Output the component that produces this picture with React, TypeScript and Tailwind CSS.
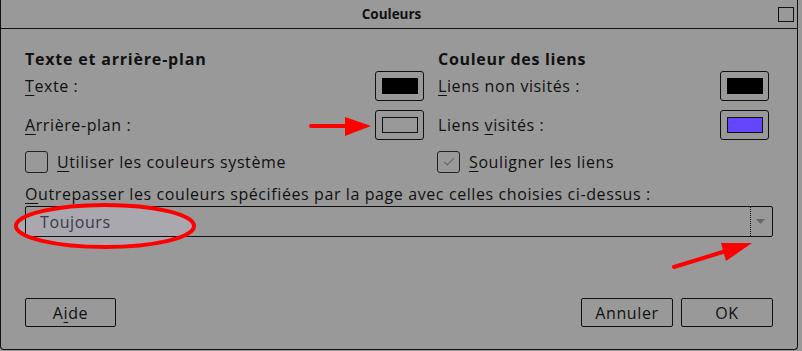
import { Check } from 'lucide-react';

const Mn = ({ children }: { children: string }) => (
  <span className="underline decoration-1 underline-offset-[3px]">{children}</span>
);

const Swatch = ({ inner }: { inner: string }) => (
  <div className="flex h-[30px] w-[49px] items-center justify-center rounded-[3px] border border-[#111]">
    <div className={`h-[16px] w-[36px] ${inner}`} />
  </div>
);

const Row = ({ children, swatch }: { children: React.ReactNode; swatch: string }) => (
  <div className="flex h-[30px] items-center justify-between">
    <span>{children}</span>
    <Swatch inner={swatch} />
  </div>
);

const CheckRow = ({ checked, children }: { checked?: boolean; children: React.ReactNode }) => (
  <div className="flex h-[22px] items-center gap-[9px]">
    <div className="flex h-[22px] w-[23px] items-center justify-center rounded-[3px] border border-[#222]">
      {checked && <Check size={14} strokeWidth={1.8} className="text-[#5e5e5e]" />}
    </div>
    <span>{children}</span>
  </div>
);

const Button = ({ children, w }: { children: React.ReactNode; w: string }) => (
  <button className={`h-[29px] ${w} rounded-[2px] border-[1.5px] border-[#111] text-[16px] leading-none tracking-[0.6px] text-[#111]`}>
    {children}
  </button>
);

export default function App() {
  return (
    <div
      className="relative h-[351px] w-[802px] overflow-hidden bg-[#999999] text-[16px] tracking-[0.6px] text-[#111]"
      style={{ fontFamily: '"Open Sans", "Noto Sans", sans-serif' }}
    >
      {/* highlight behind the combobox text */}
      <svg className="pointer-events-none absolute inset-0" width="802" height="351" viewBox="0 0 802 351">
        <ellipse cx="105" cy="226" rx="89" ry="21" fill="#a9a8ae" />
      </svg>

      <div className="relative flex h-[350px] w-[798px] flex-col rounded-b-[4px] border-x border-b border-[#111]">
        <div className="flex h-[29px] shrink-0 items-center border-b border-[#111]">
          <span className="flex-1 pl-[4px] text-center text-[13.5px] font-bold tracking-normal text-[#111]">Couleurs</span>
          <div className="mr-[3px] h-[15px] w-[16px] border border-[#111]" />
        </div>

        <div className="flex flex-1 flex-col px-[24px] pt-[20px] pb-[22px]">
          <div className="flex gap-[14px]">
            <div className="flex w-[399px] flex-col">
              <div className="h-[20px] font-bold leading-[20px] tracking-[0.8px] text-[#111]">Texte et arrière-plan</div>
              <div className="mt-[2px]">
                <Row swatch="bg-black">
                  <Mn>T</Mn>exte :
                </Row>
              </div>
              <div className="mt-[9px]">
                <Row swatch="border border-[#111]">
                  <Mn>A</Mn>rrière-plan :
                </Row>
              </div>
              <div className="mt-[11px]">
                <CheckRow>
                  <Mn>U</Mn>tiliser les couleurs système
                </CheckRow>
              </div>
            </div>
            <div className="flex w-[331px] flex-col">
              <div className="h-[20px] font-bold leading-[20px] tracking-[0.7px] text-[#111]">Couleur des liens</div>
              <div className="mt-[2px]">
                <Row swatch="bg-black">
                  <Mn>L</Mn>iens non visités :
                </Row>
              </div>
              <div className="mt-[9px]">
                <Row swatch="bg-[#6645ff] border border-[#111]">
                  Liens <Mn>v</Mn>isités :
                </Row>
              </div>
              <div className="-ml-[1px] mt-[11px]">
                <CheckRow checked>
                  <Mn>S</Mn>ouligner les liens
                </CheckRow>
              </div>
            </div>
          </div>

          <div className="mt-[11px] h-[20px] leading-[20px]">
            <Mn>O</Mn>utrepasser les couleurs spécifiées par la page avec celles choisies ci-dessus :
          </div>
          <div className="mt-[2px] flex h-[31px] items-stretch rounded-[2px] border border-[#111]">
            <div className="flex flex-1 items-center pl-[14px]">
              <span className="text-[#3a3a4a]">Toujours</span>
            </div>
            <div className="flex w-[22px] items-center justify-center border-l border-dotted border-[#111]">
              <svg width="9" height="5" viewBox="0 0 9 5" className="-ml-[3px]">
                <path d="M0 0 L9 0 L4.5 5 Z" fill="#666" />
              </svg>
            </div>
          </div>

          <div className="mt-auto flex items-center">
            <Button w="w-[91px]">
              A<Mn>i</Mn>de
            </Button>
            <div className="flex-1" />
            <div className="flex gap-[8px]">
              <Button w="w-[92px]">Annuler</Button>
              <Button w="w-[92px]">OK</Button>
            </div>
          </div>
        </div>
      </div>

      <svg className="pointer-events-none absolute inset-0" width="802" height="351" viewBox="0 0 802 351">
        <ellipse cx="105" cy="226" rx="89" ry="21" fill="none" stroke="#ff0000" strokeWidth="4" />
        <line x1="311" y1="126" x2="350" y2="126" stroke="#ff0000" strokeWidth="4" strokeLinecap="round" />
        <polygon points="345,117 371,126 345,136" fill="#ff0000" />
        <line x1="674" y1="267" x2="726" y2="251" stroke="#ff0000" strokeWidth="4" strokeLinecap="round" />
        <polygon points="726,261 752,243 721,243" fill="#ff0000" />
      </svg>
    </div>
  );
}
